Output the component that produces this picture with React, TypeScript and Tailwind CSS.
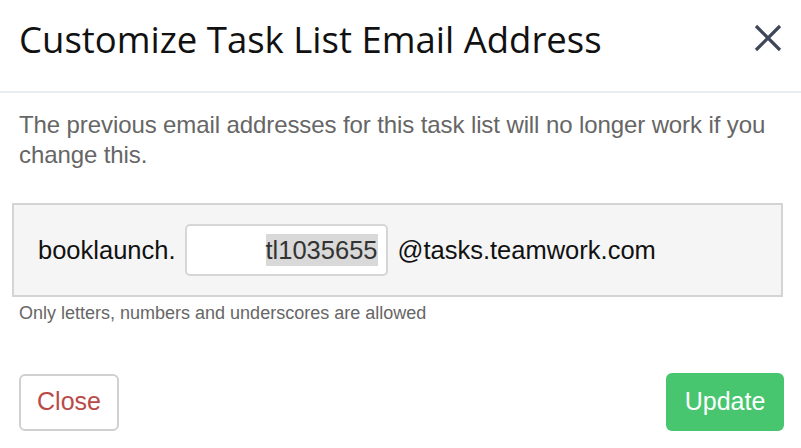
import React from "react";

const sans = { fontFamily: '"Liberation Sans", Arial, sans-serif' };

const CloseIcon = () => (
  <svg width="28" height="28" viewBox="0 0 28 28" fill="none">
    <path d="M2 2L26 26M26 2L2 26" stroke="#3d4757" strokeWidth="3.2" strokeLinecap="butt" />
  </svg>
);

const App = () => {
  return (
    <div className="w-[801px] h-[448px] bg-white overflow-hidden">
      <div className="flex items-center justify-between h-[93px] pl-[19px] pr-[19px] border-b-2 border-[#e8ecf1]">
        <h2 className="text-[36.5px] leading-none text-[#111] font-['Open_Sans',sans-serif] pb-[12px]">
          Customize Task List Email Address
        </h2>
        <button className="pb-[16px]">
          <CloseIcon />
        </button>
      </div>

      <div className="px-[19px] pt-[17px]" style={sans}>
        <p className="text-[24px] leading-[30px] text-[#666] tracking-[-0.1px]">
          The previous email addresses for this task list will no longer work if you change this.
        </p>

        <div className="mt-[33px] -ml-[7px] w-[771px] h-[94px] bg-[#f5f5f5] border-2 border-[#d4d4d4] flex items-center pl-[24px] gap-[9px]">
          <span className="text-[25.5px] text-[#111]">booklaunch.</span>
          <div className="w-[203px] h-[52px] bg-white border-2 border-[#d6d6d6] rounded-[5px] flex items-center justify-end pr-[8px]">
            <span className="text-[25.5px] text-[#333] bg-[#d9d9d9] leading-[32px]">tl1035655</span>
          </div>
          <span className="text-[25.5px] text-[#111] ml-[1px]">@tasks.teamwork.com</span>
        </div>

        <p className="mt-[5px] text-[18px] leading-[22px] text-[#666]">Only letters, numbers and underscores are allowed</p>

        <div className="flex justify-between items-center mt-[49px] -mr-[2px]">
          <button className="w-[100px] h-[57px] border-2 border-[#d0d0d0] rounded-[6px] bg-white text-[25px] text-[#b94a48]">
            Close
          </button>
          <button className="w-[118px] h-[58px] rounded-[6px] bg-[#47c66f] text-[25px] text-white">
            Update
          </button>
        </div>
      </div>
    </div>
  );
};

export default App;
